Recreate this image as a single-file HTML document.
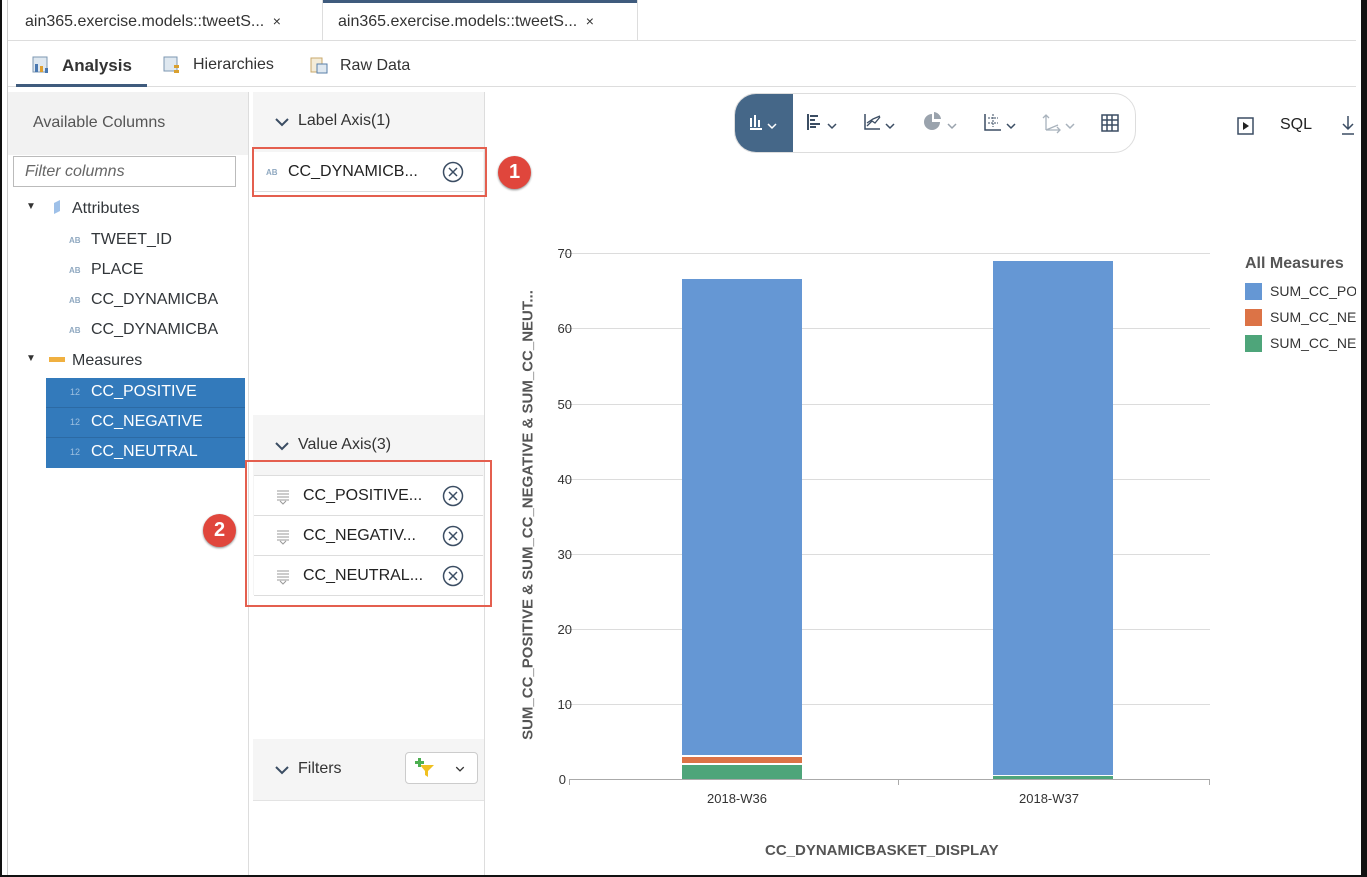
<!DOCTYPE html>
<html><head><meta charset="utf-8"><style>
*{box-sizing:border-box;margin:0;padding:0}
body{width:1367px;height:877px;position:relative;overflow:hidden;background:#fff;font-family:"Liberation Sans",sans-serif;color:#32363a}
.a{position:absolute;white-space:nowrap}
.ab{font-size:8px;color:#8fa8c0;font-weight:bold}
.n12{font-size:9px;color:#9ec0e0}
.x{width:22px;height:22px}
.grid{position:absolute;left:563px;width:647px;height:1px;background:#dcdcdc}
.yl{position:absolute;width:20px;text-align:right;left:552px;font-size:13px;color:#333}
.badge{position:absolute;width:33px;height:33px;border-radius:50%;background:#e0463c;color:#fff;font-weight:bold;font-size:20px;text-align:center;line-height:33px;box-shadow:0 1px 2px #888}
</style></head><body>
<svg width="0" height="0" style="position:absolute"><defs>
<symbol id="xc" viewBox="0 0 22 22"><circle cx="11" cy="11" r="9.5" fill="none" stroke="#3b4d63" stroke-width="1.5"/><path d="M7 7l8 8M15 7l-8 8" stroke="#3b4d63" stroke-width="1.5"/></symbol>
<symbol id="chev" viewBox="0 0 16 16"><path d="M2 5l6 6 6-6" stroke="#3b4d63" stroke-width="2" fill="none"/></symbol>
<symbol id="drag" viewBox="0 0 14 16"><path d="M1 2h12M1 5h12M1 8h12M1 11h12" stroke="#999" stroke-width="1"/><path d="M4 12l3 3 3-3" stroke="#999" fill="none"/></symbol>
</defs></svg>
<!-- borders -->
<div class="a" style="left:0;top:0;width:2px;height:877px;background:#111"></div>
<div class="a" style="left:7px;top:0;width:1px;height:877px;background:#ccc"></div>
<div class="a" style="left:0;top:875px;width:1367px;height:2px;background:#111"></div>

<!-- tabs -->
<div class="a" style="left:8px;top:40px;width:1353px;height:1px;background:#ddd"></div>
<div class="a" style="left:322px;top:0;width:1px;height:40px;background:#ddd"></div>
<div class="a" style="left:323px;top:0;width:314px;height:3px;background:#3f5b7d"></div>
<div class="a" style="left:637px;top:0;width:1px;height:40px;background:#ddd"></div>
<div class="a" style="left:25px;top:13px;font-size:16px;color:#333">ain365.exercise.models::tweetS... <span style="font-size:14px;margin-left:4px">×</span></div>
<div class="a" style="left:338px;top:13px;font-size:16px;color:#333">ain365.exercise.models::tweetS... <span style="font-size:14px;margin-left:4px">×</span></div>

<div class="a" style="left:8px;top:86px;width:1353px;height:1px;background:#ddd"></div>
<div class="a" style="left:16px;top:84px;width:131px;height:3px;background:#3f5b7d"></div>
<svg class="a" style="left:32px;top:56px" width="18" height="18"><rect x="1" y="1" width="14" height="15" fill="#dfe8f0" stroke="#7c97b2"/><rect x="3" y="8" width="3" height="8" fill="#4a78b0"/><rect x="8" y="10" width="3" height="6" fill="#e0a030"/><rect x="13" y="12" width="3" height="5" fill="#4a78b0"/></svg>
<div class="a" style="left:62px;top:56px;font-size:17px;font-weight:bold;color:#333">Analysis</div>
<svg class="a" style="left:163px;top:56px" width="18" height="18"><rect x="1" y="1" width="13" height="14" fill="#dfe8f0" stroke="#7c97b2"/><rect x="11" y="9" width="5" height="3" fill="#d9a030"/><rect x="11" y="14" width="5" height="3" fill="#d9a030"/></svg>
<div class="a" style="left:193px;top:56px;font-size:16px;color:#333">Hierarchies</div>
<svg class="a" style="left:310px;top:56px" width="18" height="18"><rect x="1" y="2" width="11" height="14" fill="#f4ecd8" stroke="#c9a86b"/><rect x="7" y="8" width="10" height="9" fill="#dfe8f0" stroke="#5a7fa8"/></svg>
<div class="a" style="left:340px;top:57px;font-size:16px;color:#333">Raw Data</div>

<!-- left panel -->
<div class="a" style="left:8px;top:92px;width:240px;height:63px;background:#f2f2f2"></div>
<div class="a" style="left:248px;top:92px;width:1px;height:783px;background:#ddd"></div>
<div class="a" style="left:33px;top:114px;font-size:16px;color:#555">Available Columns</div>
<div class="a" style="left:13px;top:156px;width:223px;height:31px;border:1px solid #bbb;background:#fff"></div>
<div class="a" style="left:25px;top:163px;font-size:16px;font-style:italic;color:#666">Filter columns</div>
<div class="a" style="left:26px;top:201px;font-size:10px;color:#333">▼</div>
<svg class="a" style="left:52px;top:199px" width="10" height="16"><path d="M2 4 L8 1 L8 12 L2 15Z" fill="#9ec0e8"/></svg>
<div class="a" style="left:72px;top:200px;font-size:16px">Attributes</div>
<div class="a ab" style="left:69px;top:236px">AB</div><div class="a" style="left:91px;top:231px;font-size:16px">TWEET_ID</div>
<div class="a ab" style="left:69px;top:266px">AB</div><div class="a" style="left:91px;top:261px;font-size:16px">PLACE</div>
<div class="a ab" style="left:69px;top:296px">AB</div><div class="a" style="left:91px;top:291px;font-size:16px">CC_DYNAMICBA</div>
<div class="a ab" style="left:69px;top:326px">AB</div><div class="a" style="left:91px;top:321px;font-size:16px">CC_DYNAMICBA</div>
<div class="a" style="left:26px;top:353px;font-size:10px;color:#333">▼</div>
<div class="a" style="left:49px;top:357px;width:16px;height:5px;background:#f0b040"></div>
<div class="a" style="left:72px;top:352px;font-size:16px">Measures</div>
<div class="a" style="left:46px;top:378px;width:199px;height:90px;background:#337abb"></div>
<div class="a" style="left:46px;top:407px;width:199px;height:1px;background:#2c6aa4"></div>
<div class="a" style="left:46px;top:437px;width:199px;height:1px;background:#2c6aa4"></div>
<div class="a n12" style="left:70px;top:387px">12</div><div class="a" style="left:91px;top:383px;font-size:16px;color:#fff">CC_POSITIVE</div>
<div class="a n12" style="left:70px;top:417px">12</div><div class="a" style="left:91px;top:413px;font-size:16px;color:#fff">CC_NEGATIVE</div>
<div class="a n12" style="left:70px;top:447px">12</div><div class="a" style="left:91px;top:443px;font-size:16px;color:#fff">CC_NEUTRAL</div>

<!-- middle panel -->
<div class="a" style="left:484px;top:92px;width:1px;height:783px;background:#ddd"></div>
<div class="a" style="left:253px;top:92px;width:231px;height:100px;background:#f5f5f5"></div>
<svg class="a" style="left:274px;top:114px" width="16" height="16"><use href="#chev"/></svg>
<div class="a" style="left:298px;top:112px;font-size:16px;color:#333">Label Axis(1)</div>
<div class="a" style="left:254px;top:152px;width:229px;height:40px;background:#fff;border-bottom:1px solid #ddd"></div>
<div class="a ab" style="left:266px;top:168px">AB</div>
<div class="a" style="left:288px;top:163px;font-size:16px;color:#222">CC_DYNAMICB...</div>
<svg class="a x" style="left:442px;top:161px"><use href="#xc"/></svg>
<div class="a" style="left:252px;top:147px;width:235px;height:50px;border:2px solid #e45f4f"></div>
<div class="badge" style="left:498px;top:156px">1</div>

<div class="a" style="left:253px;top:415px;width:231px;height:180px;background:#f5f5f5"></div>
<svg class="a" style="left:274px;top:438px" width="16" height="16"><use href="#chev"/></svg>
<div class="a" style="left:298px;top:436px;font-size:16px;color:#333">Value Axis(3)</div>
<div class="a" style="left:254px;top:476px;width:229px;height:119px;background:#fff"></div>
<div class="a" style="left:254px;top:475px;width:229px;height:1px;background:#ddd"></div>
<div class="a" style="left:254px;top:515px;width:229px;height:1px;background:#ddd"></div>
<div class="a" style="left:254px;top:555px;width:229px;height:1px;background:#ddd"></div>
<div class="a" style="left:254px;top:595px;width:229px;height:1px;background:#ddd"></div>
<svg class="a" style="left:276px;top:489px" width="14" height="16"><use href="#drag"/></svg>
<div class="a" style="left:303px;top:487px;font-size:16px;color:#222">CC_POSITIVE...</div><svg class="a x" style="left:442px;top:485px"><use href="#xc"/></svg>
<svg class="a" style="left:276px;top:529px" width="14" height="16"><use href="#drag"/></svg>
<div class="a" style="left:303px;top:527px;font-size:16px;color:#222">CC_NEGATIV...</div><svg class="a x" style="left:442px;top:525px"><use href="#xc"/></svg>
<svg class="a" style="left:276px;top:569px" width="14" height="16"><use href="#drag"/></svg>
<div class="a" style="left:303px;top:567px;font-size:16px;color:#222">CC_NEUTRAL...</div><svg class="a x" style="left:442px;top:565px"><use href="#xc"/></svg>
<div class="a" style="left:245px;top:460px;width:247px;height:147px;border:2px solid #e45f4f"></div>
<div class="badge" style="left:203px;top:514px">2</div>

<div class="a" style="left:253px;top:739px;width:231px;height:62px;background:#f5f5f5;border-bottom:1px solid #e3e3e3"></div>
<svg class="a" style="left:274px;top:762px" width="16" height="16"><use href="#chev"/></svg>
<div class="a" style="left:298px;top:760px;font-size:16px;color:#333">Filters</div>
<div class="a" style="left:405px;top:752px;width:73px;height:32px;border:1px solid #ccc;border-radius:4px;background:#fff"></div>
<svg class="a" style="left:414px;top:757px" width="24" height="22"><path d="M6 8 L20 8 L14 14 L14 20 L11 18 L11 14Z" fill="#f0c020"/><path d="M4 1h3v3h3v3h-3v3h-3v-3h-3v-3h3z" fill="#4caf50"/></svg>
<svg class="a" style="left:454px;top:764px" width="12" height="10" viewBox="0 0 16 16"><path d="M2 5l6 6 6-6" stroke="#333" stroke-width="2" fill="none"/></svg>

<!-- toolbar -->
<div class="a" style="left:734px;top:93px;width:402px;height:60px;border:1px solid #ddd;border-radius:22px;background:#fff"></div>
<div class="a" style="left:735px;top:94px;width:58px;height:58px;background:#456788;border-radius:21px 0 0 21px"></div>
<svg class="a" style="left:748px;top:112px" width="36" height="22"><path d="M3 6v9M7 3v12M11 8v7M2 17h12" stroke="#fff" stroke-width="2"/><path d="M20 12l4 4 4-4" stroke="#fff" fill="none" stroke-width="1.5"/></svg>
<svg class="a" style="left:806px;top:112px" width="36" height="22"><path d="M2 2v16M4 4h8M4 8h5M4 12h10M4 15h6" stroke="#3b4d63" stroke-width="2"/><path d="M22 12l4 4 4-4" stroke="#3b4d63" fill="none" stroke-width="1.5"/></svg>
<svg class="a" style="left:863px;top:112px" width="36" height="22"><path d="M2 2v15h15" stroke="#3b4d63" fill="none" stroke-width="1.5"/><path d="M4 14l5-5 3 2 5-6M4 11l6-4 7-3" stroke="#3b4d63" fill="none" stroke-width="1.3"/><path d="M23 12l4 4 4-4" stroke="#3b4d63" fill="none" stroke-width="1.5"/></svg>
<svg class="a" style="left:922px;top:112px" width="36" height="22"><path d="M10 2a8 8 0 1 0 8 8h-8z" fill="#9aa3ad"/><path d="M12 0a8 8 0 0 1 7 7h-7z" fill="#9aa3ad"/><path d="M26 12l4 4 4-4" stroke="#9aa3ad" fill="none" stroke-width="1.5"/></svg>
<svg class="a" style="left:983px;top:112px" width="36" height="22"><path d="M2 2v16h16" stroke="#3b4d63" fill="none" stroke-width="1.5"/><path d="M5 6h10M10 2v13M5 11h10" stroke="#3b4d63" stroke-width="1" stroke-dasharray="2 1"/><path d="M24 12l4 4 4-4" stroke="#3b4d63" fill="none" stroke-width="1.5"/></svg>
<svg class="a" style="left:1042px;top:112px" width="36" height="22"><path d="M4 18V3M1 6l3-3 3 3M4 18l12-5M4 18h14M15 15l3 3-3 3" stroke="#a8b2bc" fill="none" stroke-width="1.3"/><path d="M24 12l4 4 4-4" stroke="#a8b2bc" fill="none" stroke-width="1.5"/></svg>
<svg class="a" style="left:1101px;top:114px" width="20" height="20"><path d="M1 1h16v16H1zM1 6h16M1 11h16M6 1v16M11 1v16" stroke="#3b4d63" fill="none" stroke-width="1.5"/></svg>
<svg class="a" style="left:1237px;top:117px" width="18" height="18"><rect x="1" y="1" width="15" height="16" fill="none" stroke="#3b4d63" stroke-width="1.5"/><path d="M6 5l6 4-6 4z" fill="#222"/></svg>
<div class="a" style="left:1280px;top:116px;font-size:16px;color:#222">SQL</div>
<svg class="a" style="left:1340px;top:115px" width="16" height="22"><path d="M8 1v13M3 9l5 5 5-5M2 19h12" stroke="#3b4d63" fill="none" stroke-width="1.5"/></svg>

<!-- chart -->
<div class="grid" style="top:253px"></div>
<div class="grid" style="top:328px"></div>
<div class="grid" style="top:404px"></div>
<div class="grid" style="top:479px"></div>
<div class="grid" style="top:554px"></div>
<div class="grid" style="top:629px"></div>
<div class="grid" style="top:704px"></div>
<div class="a" style="left:569px;top:779px;width:641px;height:1px;background:#aaa"></div>
<div class="a" style="left:569px;top:779px;width:1px;height:6px;background:#aaa"></div>
<div class="a" style="left:898px;top:779px;width:1px;height:6px;background:#aaa"></div>
<div class="a" style="left:1209px;top:779px;width:1px;height:6px;background:#aaa"></div>
<div class="yl" style="top:246px">70</div><div class="yl" style="top:321px">60</div><div class="yl" style="top:397px">50</div>
<div class="yl" style="top:472px">40</div><div class="yl" style="top:547px">30</div><div class="yl" style="top:622px">20</div>
<div class="yl" style="top:697px">10</div><div class="yl" style="top:772px;left:546px">0</div>
<div class="a" style="left:682px;top:279px;width:120px;height:476px;background:#6597d4"></div>
<div class="a" style="left:682px;top:757px;width:120px;height:6px;background:#dc7346"></div>
<div class="a" style="left:682px;top:765px;width:120px;height:14px;background:#4ea57a"></div>
<div class="a" style="left:993px;top:261px;width:120px;height:514px;background:#6597d4"></div>
<div class="a" style="left:993px;top:776px;width:120px;height:3px;background:#4ea57a"></div>
<div class="a" style="left:707px;top:791px;font-size:13px;color:#333">2018-W36</div>
<div class="a" style="left:1019px;top:791px;font-size:13px;color:#333">2018-W37</div>
<div class="a" style="left:765px;top:842px;font-size:15px;font-weight:bold;color:#555">CC_DYNAMICBASKET_DISPLAY</div>
<div class="a" style="left:528px;top:515px;transform:translate(-50%,-50%) rotate(-90deg);font-size:15px;font-weight:bold;color:#555">SUM_CC_POSITIVE &amp; SUM_CC_NEGATIVE &amp; SUM_CC_NEUT...</div>
<div class="a" style="left:1245px;top:255px;font-size:16px;font-weight:bold;color:#555">All Measures</div>
<div class="a" style="left:1245px;top:283px;width:17px;height:17px;background:#6597d4"></div>
<div class="a" style="left:1245px;top:309px;width:17px;height:17px;background:#dc7346"></div>
<div class="a" style="left:1245px;top:335px;width:17px;height:17px;background:#4ea57a"></div>
<div class="a" style="left:1270px;top:283px;font-size:14px;color:#333">SUM_CC_PO</div>
<div class="a" style="left:1270px;top:309px;font-size:14px;color:#333">SUM_CC_NE</div>
<div class="a" style="left:1270px;top:335px;font-size:14px;color:#333">SUM_CC_NE</div>
<div class="a" style="left:1356px;top:0;width:5px;height:875px;background:#fff"></div>
<div class="a" style="left:1361px;top:0;width:6px;height:877px;background:#111"></div>
</body></html>
